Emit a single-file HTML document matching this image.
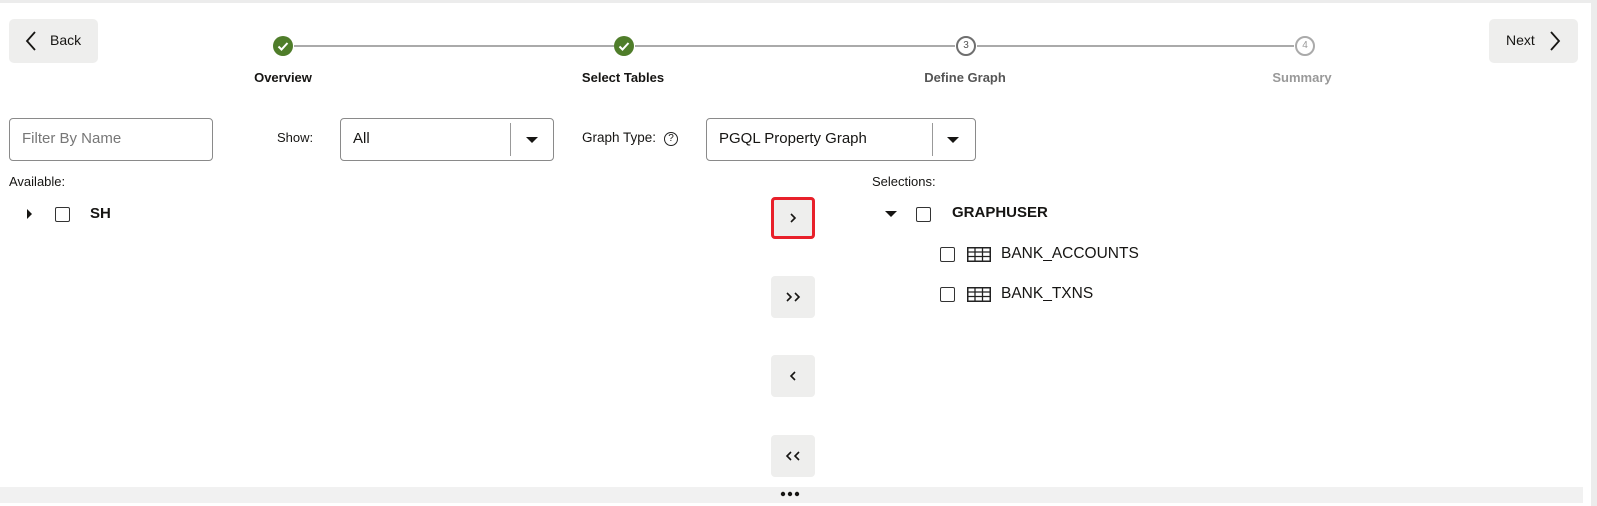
<!DOCTYPE html>
<html><head><meta charset="utf-8"><style>
*{margin:0;padding:0;box-sizing:border-box}
body{width:1597px;height:506px;overflow:hidden;background:#fff;font-family:"Liberation Sans",sans-serif;color:#161513;position:relative}
.a{position:absolute}
.btn{background:#eeeeed;border-radius:5px}
.circ{position:absolute;width:22px;height:22px;border-radius:50%}
.lbl{position:absolute;font-size:13px;font-weight:bold;transform:translateX(-50%);white-space:nowrap;top:70px}
.box{position:absolute;border:1px solid #8a8a8a;border-radius:4px;background:#fff}
.cb{position:absolute;width:15px;height:15px;border:1.5px solid #333;border-radius:2px}
.tri{position:absolute;width:0;height:0}
.sb{position:absolute;left:771px;width:44px;height:42px;background:#eeeeed;border-radius:4px}
.sb svg{position:absolute;left:0;top:0}
</style></head><body>
<div class="a" style="left:0;top:0;width:1597px;height:3px;background:#ececec"></div>
<div class="a" style="left:1591px;top:0;width:6px;height:506px;background:#ececec"></div>

<div class="a btn" style="left:9px;top:19px;width:89px;height:44px">
<svg class="a" style="left:16px;top:12px" width="12" height="20"><path d="M10 1 L2 10 L10 19" stroke="#161513" stroke-width="1.8" fill="none"/></svg>
<span class="a" style="left:41px;top:13px;font-size:14px">Back</span></div>
<div class="a btn" style="left:1489px;top:19px;width:89px;height:44px">
<span class="a" style="left:17px;top:13px;font-size:14px">Next</span>
<svg class="a" style="left:60px;top:12px" width="12" height="20"><path d="M2 1 L10 10 L2 19" stroke="#161513" stroke-width="1.8" fill="none"/></svg></div>

<div class="a" style="left:294px;top:45px;width:320px;height:1.5px;background:#aaa"></div>
<div class="a" style="left:635px;top:45px;width:320px;height:1.5px;background:#aaa"></div>
<div class="a" style="left:977px;top:45px;width:317px;height:1.5px;background:#aaa"></div>
<div class="circ" style="left:273px;top:36px;width:20px;height:20px;background:#4f7d2a"><svg width="20" height="20"><path d="M5.5 10.5 L8.5 13.5 L14.5 7" stroke="#fff" stroke-width="2" fill="none"/></svg></div>
<div class="circ" style="left:614px;top:36px;width:20px;height:20px;background:#4f7d2a"><svg width="20" height="20"><path d="M5.5 10.5 L8.5 13.5 L14.5 7" stroke="#fff" stroke-width="2" fill="none"/></svg></div>
<div class="circ" style="left:956px;top:36px;width:20px;height:20px;border:2px solid #6f6f6f;font-size:10px;text-align:center;line-height:16px;color:#555">3</div>
<div class="circ" style="left:1295px;top:36px;width:20px;height:20px;border:2px solid #aaa;font-size:10px;text-align:center;line-height:16px;color:#999">4</div>
<div class="lbl" style="left:283px">Overview</div>
<div class="lbl" style="left:623px">Select Tables</div>
<div class="lbl" style="left:965px;color:#555">Define Graph</div>
<div class="lbl" style="left:1302px;color:#999">Summary</div>

<div class="box" style="left:9px;top:118px;width:204px;height:43px"><span class="a" style="left:12px;top:11px;font-size:15px;color:#777">Filter By Name</span></div>
<span class="a" style="left:277px;top:130px;font-size:13px">Show:</span>
<div class="box" style="left:340px;top:118px;width:214px;height:43px"><span class="a" style="left:12px;top:11px;font-size:15px">All</span>
<div class="a" style="left:169px;top:4px;width:1px;height:33px;background:#999"></div>
<div class="tri" style="left:185px;top:18px;border-left:6px solid transparent;border-right:6px solid transparent;border-top:6px solid #161513"></div></div>
<span class="a" style="left:582px;top:130px;font-size:13.5px">Graph Type:</span>
<div class="a" style="left:664px;top:132px;width:14px;height:14px;border:1.3px solid #222;border-radius:50%;font-size:10px;text-align:center;line-height:12px">?</div>
<div class="box" style="left:706px;top:118px;width:270px;height:43px"><span class="a" style="left:12px;top:11px;font-size:15px">PGQL Property Graph</span>
<div class="a" style="left:225px;top:4px;width:1px;height:33px;background:#999"></div>
<div class="tri" style="left:240px;top:18px;border-left:6px solid transparent;border-right:6px solid transparent;border-top:6px solid #161513"></div></div>

<span class="a" style="left:9px;top:174px;font-size:13px">Available:</span>
<div class="tri" style="left:27px;top:209px;border-top:5px solid transparent;border-bottom:5px solid transparent;border-left:5px solid #161513"></div>
<div class="cb" style="left:55px;top:207px"></div>
<span class="a" style="left:90px;top:205px;font-size:15px;font-weight:bold">SH</span>

<div class="sb" style="top:197px;outline:3px solid #e8202a;outline-offset:-3px"><svg width="44" height="42"><path d="M20 17 L24 21 L20 25" stroke="#161513" stroke-width="1.6" fill="none"/></svg></div>
<div class="sb" style="top:276px"><svg width="44" height="42"><path d="M16 17 L20 21 L16 25 M24 17 L28 21 L24 25" stroke="#161513" stroke-width="1.6" fill="none"/></svg></div>
<div class="sb" style="top:355px"><svg width="44" height="42"><path d="M24 17 L20 21 L24 25" stroke="#161513" stroke-width="1.6" fill="none"/></svg></div>
<div class="sb" style="top:435px"><svg width="44" height="42"><path d="M20 17 L16 21 L20 25 M28 17 L24 21 L28 25" stroke="#161513" stroke-width="1.6" fill="none"/></svg></div>

<span class="a" style="left:872px;top:174px;font-size:13px">Selections:</span>
<div class="tri" style="left:885px;top:211px;border-left:6px solid transparent;border-right:6px solid transparent;border-top:6px solid #161513"></div>
<div class="cb" style="left:916px;top:207px"></div>
<span class="a" style="left:952px;top:204px;font-size:15px;font-weight:bold">GRAPHUSER</span>
<div class="cb" style="left:940px;top:247px"></div>
<svg class="a" style="left:967px;top:247px" width="24" height="15"><rect x="0.75" y="0.75" width="22.5" height="13.5" fill="none" stroke="#222" stroke-width="1.5"/><path d="M0 5H24M0 9.5H24M8 0V15M15.5 0V15" stroke="#222" stroke-width="1.3"/></svg>
<span class="a" style="left:1001px;top:245px;font-size:15.5px">BANK_ACCOUNTS</span>
<div class="cb" style="left:940px;top:287px"></div>
<svg class="a" style="left:967px;top:287px" width="24" height="15"><rect x="0.75" y="0.75" width="22.5" height="13.5" fill="none" stroke="#222" stroke-width="1.5"/><path d="M0 5H24M0 9.5H24M8 0V15M15.5 0V15" stroke="#222" stroke-width="1.3"/></svg>
<span class="a" style="left:1001px;top:285px;font-size:15.5px">BANK_TXNS</span>

<div class="a" style="left:0;top:487px;width:1583px;height:16px;background:#f1f1f1"></div>
<svg class="a" style="left:780px;top:491px" width="20" height="6"><circle cx="3" cy="3" r="2.2" fill="#161513"/><circle cx="10" cy="3" r="2.2" fill="#161513"/><circle cx="17" cy="3" r="2.2" fill="#161513"/></svg>
</body></html>
